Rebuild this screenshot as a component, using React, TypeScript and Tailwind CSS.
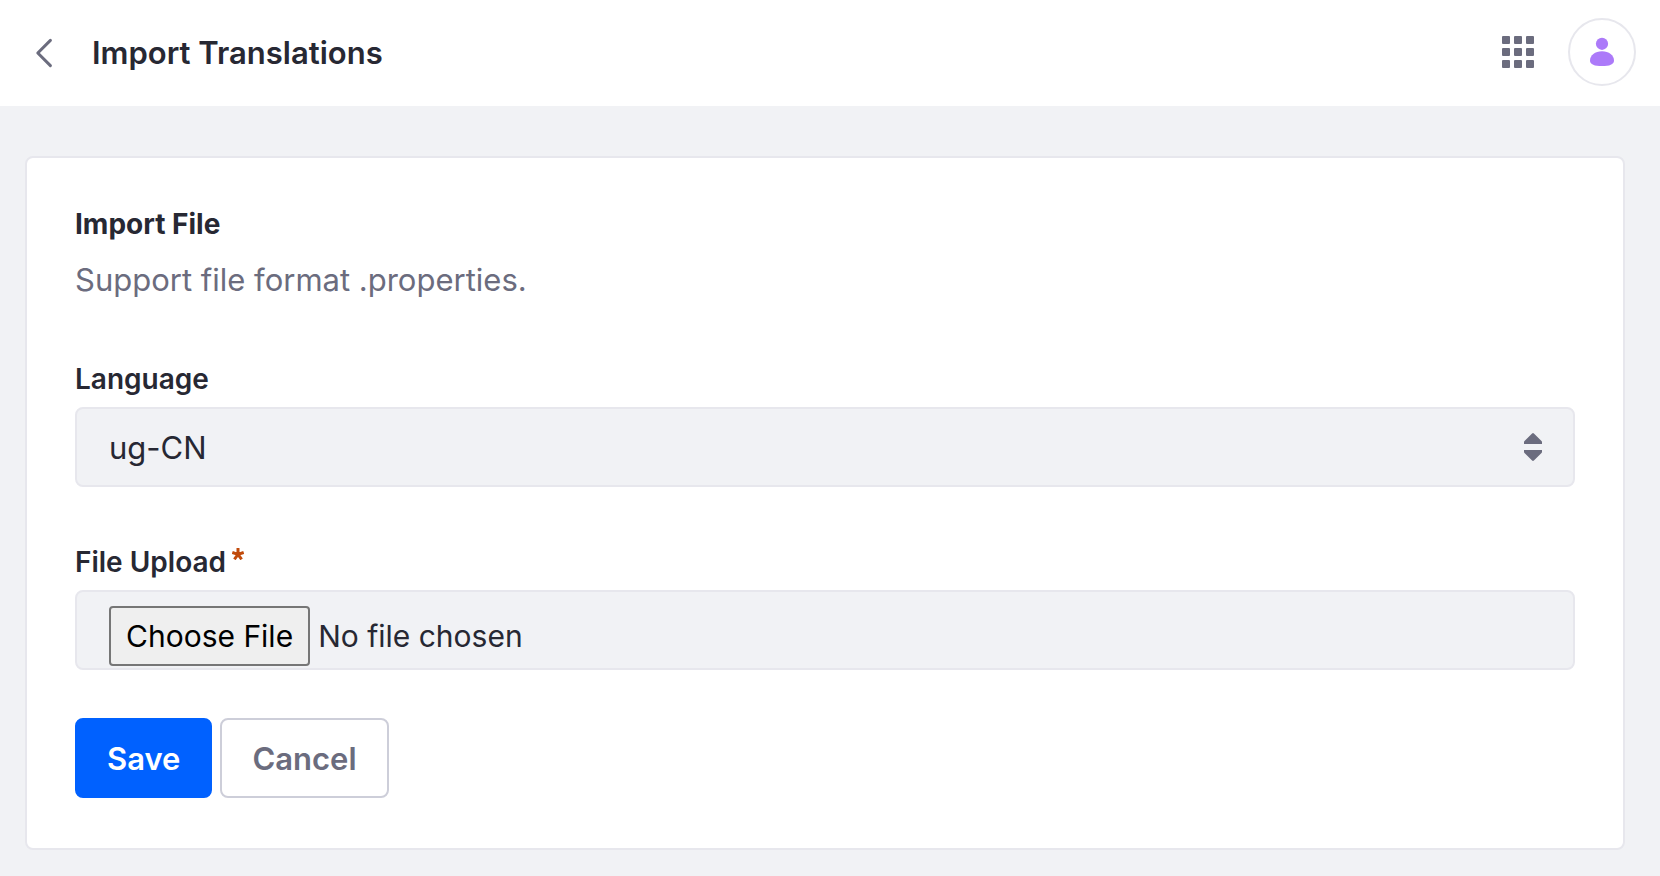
function BackIcon() {
  return (
    <svg className="h-8 w-8" viewBox="0 0 32 32" fill="none" stroke="currentColor" strokeWidth="3" strokeLinecap="round" strokeLinejoin="round" aria-hidden="true">
      <path d="M22.4 3.4 9.8 16l12.6 12.6" />
    </svg>
  );
}

function GridIcon() {
  const steps = [0, 12, 24];
  return (
    <svg className="h-8 w-8" viewBox="0 0 32 32" fill="currentColor" aria-hidden="true">
      {steps.map((y) => steps.map((x) => <rect key={`${x}-${y}`} x={x} y={y} width="8" height="8" rx="1" />))}
    </svg>
  );
}

function UserIcon() {
  return (
    <svg className="h-8 w-8" viewBox="0 0 32 32" fill="currentColor" aria-hidden="true">
      <circle cx="16" cy="7.8" r="6.1" />
      <path d="M4 24.4C4 19.4 9 15.2 16 15.2s12 4.2 12 9.2c0 4-4.6 5.7-12 5.7S4 28.4 4 24.4Z" />
    </svg>
  );
}

function CaretDoubleIcon() {
  return (
    <svg className="pointer-events-none absolute top-6 right-[33px] h-8 w-[18px]" viewBox="0 0 18 32" fill="currentColor" aria-hidden="true">
      <path d="M8.1 2.4q.9-.8 1.8 0l7.6 7.6q.5.5.5 1.2V13H0v-1.8q0-.7.5-1.2Z" />
      <path d="M8.1 29.6q.9.8 1.8 0l7.6-7.6q.5-.5.5-1.2V19H0v1.8q0 .7.5 1.2Z" />
    </svg>
  );
}

function RequiredIcon() {
  return (
    <svg className="h-3 w-3 text-[#c14a0b]" viewBox="0 0 12 12" fill="none" stroke="currentColor" strokeWidth="3" aria-hidden="true">
      <path d="M6 6.3V0M6 6.3.3 4.4M6 6.3l5.7-1.9M6 6.3l-3.6 5M6 6.3l3.6 5" />
    </svg>
  );
}

export default function App() {
  return (
    <div className="min-h-screen bg-[#f1f2f5] font-['Inter',sans-serif] text-[#272833]">
      <header className="flex h-[106px] items-center bg-white pr-6 pl-7">
        <a href="#back" aria-label="Back" className="text-[#6b6c7e]">
          <BackIcon />
        </a>
        <h1 className="ml-8 text-[31px] leading-10 font-semibold">Import Translations</h1>
        <div className="ml-auto flex items-center gap-[34px] pb-0.5">
          <button type="button" aria-label="Applications" className="text-[#6b6c7e]">
            <GridIcon />
          </button>
          <button type="button" aria-label="User profile" className="flex size-[68px] items-center justify-center rounded-full border-2 border-[#e7e7ed] text-[#ac7af9]">
            <UserIcon />
          </button>
        </div>
      </header>

      <main className="pt-[50px] pr-[35px] pb-6 pl-[25px]">
        <form className="rounded-lg border-2 border-[#e7e7ed] bg-white px-12 pt-12 pb-[50px]" onSubmit={(e) => e.preventDefault()}>
          <h2 className="text-[28px] leading-9 font-bold">Import File</h2>
          <p className="mt-3.5 text-[31px] leading-12 text-[#6b6c7e]">Support file format .properties.</p>

          <div className="mt-[57px] flex flex-col gap-2.5">
            <label htmlFor="language" className="text-[28px] leading-9 font-semibold">
              Language
            </label>
            <div className="relative text-[#6b6c7e]">
              <select id="language" className="block h-20 w-full appearance-none rounded-lg border-2 border-[#e7e7ed] bg-[#f1f2f5] px-8 pt-0.5 text-[31px] text-[#272833]">
                <option>ug-CN</option>
              </select>
              <CaretDoubleIcon />
            </div>
          </div>

          <div className="mt-[57px] flex flex-col gap-2.5">
            <label htmlFor="upload" className="flex items-start gap-1.5 text-[28px] leading-9 font-semibold">
              File Upload
              <span className="pt-1">
                <RequiredIcon />
              </span>
            </label>
            <input
              id="upload"
              type="file"
              required
              className="block h-20 w-full rounded-lg border-2 border-[#e7e7ed] bg-[#f1f2f5] px-8 pt-3.5 text-[30px] file:mr-2 file:h-[60px] file:rounded file:border-2 file:border-solid file:border-[#767676] file:bg-[#efefef] file:px-[15px] file:text-black"
            />
          </div>

          <div className="mt-12 flex gap-2">
            <button type="submit" className="h-20 rounded-lg border-2 border-[#0061ff] bg-[#0061ff] px-[30px] pt-0.5 text-[31px] font-semibold text-white">
              Save
            </button>
            <button type="button" className="h-20 rounded-lg border-2 border-[#cdced9] bg-white px-[30px] pt-0.5 text-[31px] font-semibold text-[#6b6c7e]">
              Cancel
            </button>
          </div>
        </form>
      </main>
    </div>
  );
}
